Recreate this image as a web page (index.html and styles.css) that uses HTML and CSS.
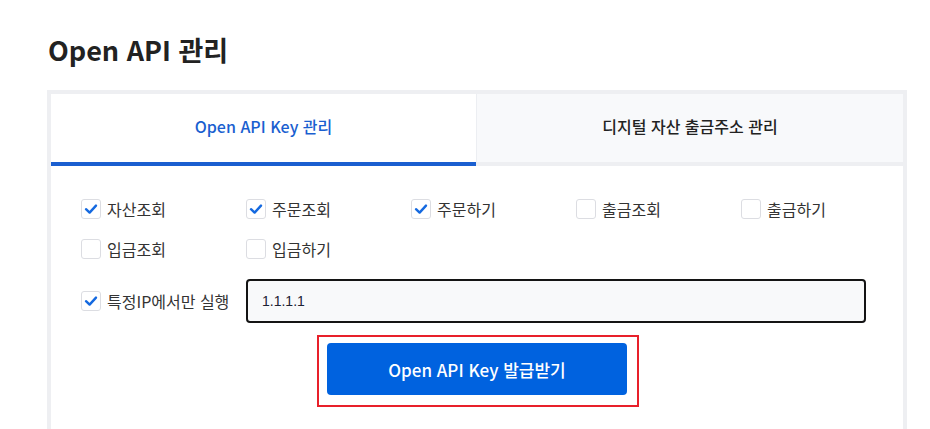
FILE: index.html
```html
<!DOCTYPE html>
<html lang="ko">
<head>
<meta charset="utf-8">
<title>Open API 관리</title>
<link rel="stylesheet" href="styles.css">
</head>
<body>
<div class="page">
  <h1 class="title">Open API 관리</h1>
  <div class="panel">
    <div class="tabs">
      <div class="tab tab-active">Open API Key 관리</div>
      <div class="tab tab-inactive">디지털 자산 출금주소 관리</div>
    </div>
    <div class="content">
      <div class="perm-grid">
        <label class="chk"><span class="box checked"><svg viewBox="0 0 20 20" width="20" height="20"><path d="M5 10.2 L8.6 13.6 L15 6.6" fill="none" stroke="#1469e0" stroke-width="2.4" stroke-linecap="round" stroke-linejoin="round"/></svg></span><span class="lbl">자산조회</span></label>
        <label class="chk"><span class="box checked"><svg viewBox="0 0 20 20" width="20" height="20"><path d="M5 10.2 L8.6 13.6 L15 6.6" fill="none" stroke="#1469e0" stroke-width="2.4" stroke-linecap="round" stroke-linejoin="round"/></svg></span><span class="lbl">주문조회</span></label>
        <label class="chk"><span class="box checked"><svg viewBox="0 0 20 20" width="20" height="20"><path d="M5 10.2 L8.6 13.6 L15 6.6" fill="none" stroke="#1469e0" stroke-width="2.4" stroke-linecap="round" stroke-linejoin="round"/></svg></span><span class="lbl">주문하기</span></label>
        <label class="chk"><span class="box"></span><span class="lbl">출금조회</span></label>
        <label class="chk"><span class="box"></span><span class="lbl">출금하기</span></label>
        <label class="chk"><span class="box"></span><span class="lbl">입금조회</span></label>
        <label class="chk"><span class="box"></span><span class="lbl">입금하기</span></label>
      </div>
      <div class="ip-row">
        <label class="chk ip-chk"><span class="box checked"><svg viewBox="0 0 20 20" width="20" height="20"><path d="M5 10.2 L8.6 13.6 L15 6.6" fill="none" stroke="#1469e0" stroke-width="2.4" stroke-linecap="round" stroke-linejoin="round"/></svg></span><span class="lbl">특정IP에서만 실행</span></label>
        <div class="ip-input">1.1.1.1</div>
      </div>
      <div class="btn-row">
        <div class="highlight">
          <button class="issue-btn">Open API Key 발급받기</button>
        </div>
      </div>
    </div>
  </div>
</div>
</body>
</html>
```
FILE: styles.css
```css
* { box-sizing: border-box; }
html, body { margin: 0; padding: 0; background: #fff; }
body {
  font-family: "Noto Sans CJK KR", "Noto Sans", sans-serif;
  color: #222;
  overflow: hidden;
  height: 429px;
}
.page {
  padding-left: 47px;
  padding-top: 30px;
}
.title {
  margin: 0 0 0 1px;
  font-size: 27px;
  font-weight: 700;
  line-height: 40px;
  height: 40px;
  color: #222;
}
.panel {
  margin-top: 20px;
  width: 860px;
  border: 4px solid #eeeff2;
  border-bottom: none;
  height: 339px;
}
.tabs {
  display: flex;
  height: 72px;
}
.tab {
  flex: 1;
  display: flex;
  align-items: center;
  justify-content: center;
  font-size: 16px;
  font-weight: 500;
  padding-bottom: 4px;
}
.tab-active {
  color: #1a5fd0;
  background: #fff;
  border-bottom: 4px solid #1a5fd0;
  flex: 0 0 425px;
}
.tab-inactive {
  color: #222;
  background: #f8f9fb;
  border-left: 1px solid #eceef2;
  border-bottom: 4px solid #eeeff2;
}
.content {
  padding: 33px 37px 0 30px;
}
.perm-grid {
  display: grid;
  grid-template-columns: repeat(5, 165px);
  row-gap: 20px;
}
.chk {
  display: flex;
  align-items: center;
  height: 20px;
}
.box {
  width: 20px;
  height: 20px;
  border: 1px solid #dcdde2;
  border-radius: 3px;
  background: #fff;
  display: flex;
  align-items: center;
  justify-content: center;
  flex: 0 0 20px;
}
.box svg { display: block; margin: -1px; }
.lbl {
  margin-left: 6px;
  font-size: 16px;
  font-weight: 400;
  color: #333;
  line-height: 20px;
}
.ip-row {
  display: flex;
  align-items: center;
  margin-top: 20px;
}
.ip-chk { width: 165px; flex: 0 0 165px; }
.ip-input {
  width: 620px;
  height: 44px;
  border: 2px solid #141414;
  border-radius: 4px;
  background: #f8f9fa;
  padding-left: 14px;
  display: flex;
  align-items: center;
  font-family: "Liberation Sans", Arial, sans-serif;
  font-size: 14px;
  color: #1c2233;
}
.btn-row {
  display: flex;
  justify-content: center;
  margin-top: 12px;
  padding-left: 9px;
}
.highlight {
  border: 2px solid #e8202a;
  padding: 6px 10px 10px 8px;
}
.issue-btn {
  display: block;
  width: 300px;
  height: 52px;
  border: none;
  border-radius: 4px;
  background: #0062df;
  color: #fff;
  font-family: "Noto Sans CJK KR", "Noto Sans", sans-serif;
  font-size: 17px;
  font-weight: 500;
  cursor: pointer;
}
```
